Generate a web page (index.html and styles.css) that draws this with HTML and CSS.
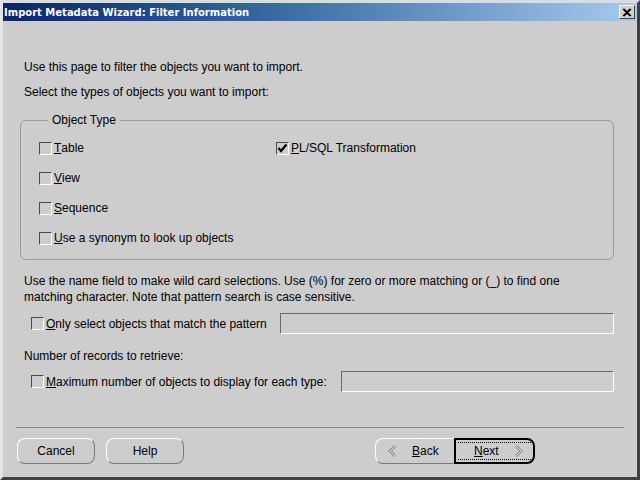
FILE: index.html
```html
<html>
    <head>
        <meta charset="UTF-8">
        <link rel="stylesheet" href="styles.css">
    </head>

    <body>
        <div class="window">
            <div class="titlebar">
                <span class="title">Import Metadata Wizard: Filter Information</span>
                <span class="close-btn">
                    <svg width="10" height="9" viewBox="0 0 10 9">
                        <path d="M1 1 L8 8 M2 1 L9 8 M8 1 L1 8 M9 1 L2 8" stroke="#000" stroke-width="1.2" fill="none"/>
                    </svg>
                </span>
            </div>

            <div class="content">
                <p class="intro">Use this page to filter the objects you want to import.</p>
                <p class="intro second">Select the types of objects you want to import:</p>

                <fieldset class="group">
                    <legend>Object Type</legend>
                    <div class="types">
                        <div class="col">
                            <label class="check"><span class="box"></span><u>T</u>able</label>
                            <label class="check"><span class="box"></span><u>V</u>iew</label>
                            <label class="check"><span class="box"></span><u>S</u>equence</label>
                            <label class="check"><span class="box"></span><u>U</u>se a synonym to look up objects</label>
                        </div>
                        <div class="col">
                            <label class="check"><span class="box checked">
                                <svg width="11" height="11" viewBox="0 0 11 11">
                                    <path d="M1.5 5 L4 8 L9.5 1.5" stroke="#000" stroke-width="2.2" fill="none"/>
                                </svg>
                            </span><u>P</u>L/SQL Transformation</label>
                        </div>
                    </div>
                </fieldset>

                <p class="note">Use the name field to make wild card selections. Use (%) for zero or more matching or (_) to find one matching character. Note that pattern search is case sensitive.</p>

                <div class="field-row pattern">
                    <label class="check"><span class="box"></span><u>O</u>nly select objects that match the pattern</label>
                    <span class="textfield"></span>
                </div>

                <p class="records">Number of records to retrieve:</p>

                <div class="field-row maximum">
                    <label class="check"><span class="box"></span><u>M</u>aximum number of objects to display for each type:</label>
                    <span class="textfield"></span>
                </div>
            </div>

            <div class="footer">
                <div class="left-buttons">
                    <button class="btn">Cancel</button>
                    <button class="btn">Help</button>
                </div>
                <div class="nav-buttons">
                    <button class="btn back">
                        <svg width="10" height="12" viewBox="0 0 10 12">
                            <path d="M7 1 L2 6 L7 11" stroke="#888" stroke-width="2.6" fill="none"/>
                            <path d="M7 1 L2 6 L7 11" stroke="#fff" stroke-width="0.8" fill="none"/>
                        </svg>
                        <span><u>B</u>ack</span>
                    </button>
                    <button class="btn next">
                        <span class="focus">
                            <span><u>N</u>ext</span>
                            <svg width="10" height="12" viewBox="0 0 10 12">
                                <path d="M3 1 L8 6 L3 11" stroke="#888" stroke-width="2.6" fill="none"/>
                                <path d="M3 1 L8 6 L3 11" stroke="#fff" stroke-width="0.8" fill="none"/>
                            </svg>
                        </span>
                    </button>
                </div>
            </div>
        </div>
    </body>
</html>
```

FILE: styles.css
```css
html, body {
    margin: 0;
    padding: 0;
}

body {
    font-family: "Liberation Sans", Arial, sans-serif;
    font-size: 12px;
    color: #000;
    background: #cdcdcd;
}

.window {
    width: 640px;
    height: 480px;
    box-sizing: border-box;
    background: #cdcdcd;
    border-top: 3px solid #dcdcdc;
    border-left: 3px solid #e4e4e4;
    border-right: 3px solid #404040;
    border-bottom: 3px solid #404040;
    display: flex;
    flex-direction: column;
}

.titlebar {
    height: 18px;
    display: flex;
    align-items: center;
    justify-content: space-between;
    padding: 0 2px 0 1px;
    background: linear-gradient(to right, #0a246a 0%, #3a6ea5 45%, #a6caf0 100%);
}

.title {
    color: #fff;
    font-family: "DejaVu Sans", sans-serif;
    font-weight: bold;
    font-size: 10px;
}

.close-btn {
    width: 16px;
    height: 14px;
    box-sizing: border-box;
    background: #d4d0c8;
    border: 1px solid;
    border-color: #fff #404040 #404040 #fff;
    display: flex;
    align-items: center;
    justify-content: center;
}

.content {
    padding: 39px 23px 0 17px;
    flex: 1;
}

.intro {
    margin: 0 0 0 4px;
    line-height: 14px;
}

.intro.second {
    margin-top: 11px;
}

.group {
    margin: 14px 0 0 0;
    padding: 14px 16px 8px 18px;
    border: 1px solid #9a9a9a;
    border-radius: 6px;
    height: 147px;
    box-sizing: border-box;
}

.group legend {
    padding: 0 4px;
    margin-left: 9px;
    line-height: 14px;
}

.types {
    display: flex;
}

.col {
    display: flex;
    flex-direction: column;
    gap: 16px;
}

.col:first-child {
    width: 237px;
}

.check {
    display: flex;
    align-items: center;
    height: 14px;
    white-space: nowrap;
}

.box {
    width: 13px;
    height: 13px;
    box-sizing: border-box;
    border: 1px solid;
    border-color: #4a4a4a #fff #fff #4a4a4a;
    background: #cdcdcd;
    margin-right: 2px;
    display: flex;
    align-items: center;
    justify-content: center;
}

.note {
    margin: 13px 0 0 4px;
    line-height: 16px;
    width: 560px;
}

.field-row {
    display: flex;
    align-items: center;
    justify-content: space-between;
    margin: 8px 0 0 11px;
}

.textfield {
    display: block;
    flex: 0 0 auto;
    height: 21px;
    box-sizing: border-box;
    border: 1px solid;
    border-color: #6a6a6a #fff #fff #6a6a6a;
}

.pattern .textfield {
    width: 334px;
}

.maximum .textfield {
    width: 273px;
}

.records {
    margin: 15px 0 0 4px;
    line-height: 14px;
}

.footer {
    margin: 0 13px 0 13px;
    border-top: 1px solid #8c8c8c;
    padding: 10px 0 13px 1px;
    display: flex;
    justify-content: space-between;
}

.left-buttons {
    display: flex;
    gap: 11px;
}

.btn {
    font-family: "Liberation Sans", Arial, sans-serif;
    font-size: 12px;
    color: #000;
    background: #cdcdcd;
    width: 78px;
    height: 26px;
    padding: 0;
    border: 1px solid;
    border-color: #fff #7a7a7a #7a7a7a #fff;
    border-radius: 8px;
    display: flex;
    align-items: center;
    justify-content: center;
}

.nav-buttons {
    display: flex;
    margin-right: 89px;
}

.btn.back {
    width: 80px;
    border-radius: 8px 0 0 8px;
    justify-content: flex-start;
    padding-left: 12px;
    gap: 14px;
}

.btn.next {
    width: 81px;
    border: 2px solid #000;
    border-radius: 1px 8px 8px 1px;
    padding: 2px;
    margin-left: -1px;
}

.focus {
    border-top: 1px dotted #000;
    border-bottom: 1px dotted #000;
    width: 100%;
    height: 100%;
    box-sizing: border-box;
    display: flex;
    align-items: center;
    padding-left: 16px;
    gap: 14px;
}
```
